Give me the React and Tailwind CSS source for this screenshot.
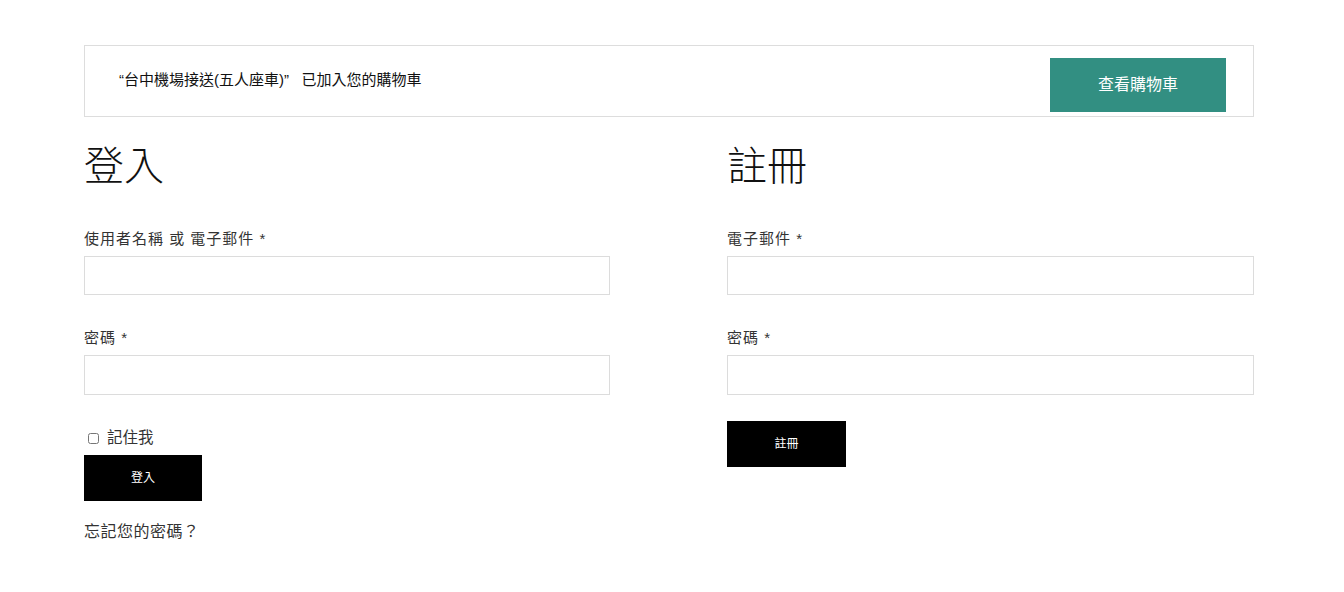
import React from 'react';

const font = { fontFamily: '"Liberation Sans", "Noto Sans CJK TC", sans-serif' };

function Field({ label, className = '', h = 'h-[39px]' }) {
  return (
    <div className={className}>
      <label className="block text-[15px] leading-[20px] tracking-[1px] text-[#333] mb-[7px]">{label}</label>
      <input type="text" className={`block w-full ${h} border border-[#dcdcdc] bg-white outline-none px-3`} />
    </div>
  );
}

export default function App() {
  return (
    <div className="min-h-screen bg-white text-[#222]" style={font}>
      <div className="w-[1170px] ml-[84px] pt-[45px]">
        {/* Notice */}
        <div className="h-[72px] border border-[#dddddd] flex items-center justify-between pl-[34px] pr-[27px]">
          <p className="text-[15px] text-[#111] mt-[-2px]">“台中機場接送(五人座車)” &nbsp;&nbsp;已加入您的購物車</p>
          <button className="w-[176px] h-[54px] mt-[8px] bg-[#328f82] text-white text-[16px]">查看購物車</button>
        </div>

        <div className="flex gap-[117px]">
          {/* Login */}
          <div className="w-[526px]">
            <h2 className="mt-[28px] text-[40px] leading-[43px] font-light text-[#111]">登入</h2>
            <Field label="使用者名稱 或 電子郵件 *" className="mt-[41px]" />
            <Field label="密碼 *" className="mt-[33px]" h="h-[40px]" />
            <label className="mt-[33px] flex items-center gap-[8px] text-[15.5px] leading-[20px] text-[#333] pl-[4px]">
              <input type="checkbox" className="w-[11px] h-[11px] accent-gray-400" />
              記住我
            </label>
            <button className="mt-[7px] w-[118px] h-[46px] bg-black text-white text-[12px]">登入</button>
            <p className="mt-[21px] text-[16px] leading-[20px] tracking-[0.5px] text-[#333]">忘記您的密碼？</p>
          </div>

          {/* Register */}
          <div className="w-[527px]">
            <h2 className="mt-[28px] text-[40px] leading-[43px] font-light text-[#111]">註冊</h2>
            <Field label="電子郵件 *" className="mt-[41px]" />
            <Field label="密碼 *" className="mt-[33px]" h="h-[40px]" />
            <button className="mt-[26px] w-[119px] h-[46px] bg-black text-white text-[12px]">註冊</button>
          </div>
        </div>
      </div>
    </div>
  );
}
